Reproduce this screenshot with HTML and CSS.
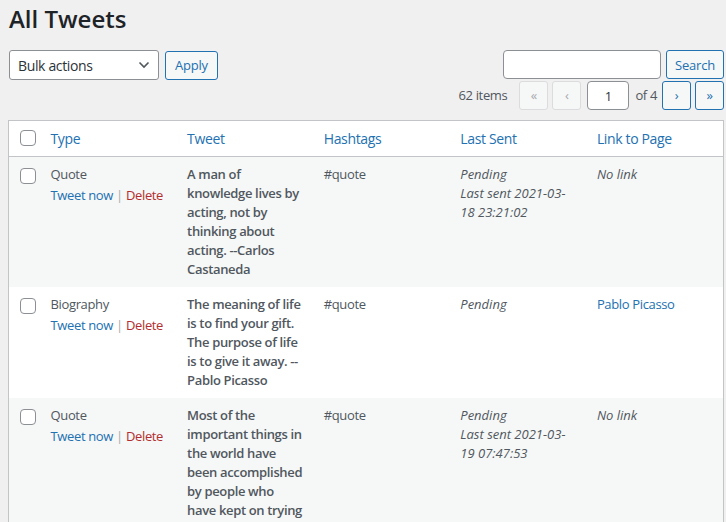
FILE: index.html
```html
<!DOCTYPE html>
<html lang="en">
<head>
<meta charset="utf-8">
<title>All Tweets</title>
<link rel="stylesheet" href="styles.css">
</head>
<body>
<div class="wrap">
  <h1 class="title">All Tweets</h1>
  <div class="toolbar">
    <div class="bulk">
      <div class="select">
        <span>Bulk actions</span>
        <svg class="chev" width="12" height="8" viewBox="0 0 12 8"><path d="M1.5 1.5 L6 6 L10.5 1.5" fill="none" stroke="#50575e" stroke-width="1.6"/></svg>
      </div>
      <button class="btn">Apply</button>
    </div>
    <div class="right">
      <div class="search">
        <input class="search-input" type="text">
        <button class="btn">Search</button>
      </div>
      <div class="pager">
        <span class="count">62 items</span>
        <span class="pbtn disabled">«</span>
        <span class="pbtn disabled">‹</span>
        <input class="page-input" type="text" value="1">
        <span class="of">of 4</span>
        <span class="pbtn">›</span>
        <span class="pbtn">»</span>
      </div>
    </div>
  </div>
  <table class="list">
    <colgroup>
      <col class="c-check">
      <col><col><col><col><col>
    </colgroup>
    <thead>
      <tr>
        <th class="check"><span class="cb"></span></th>
        <th><a>Type</a></th>
        <th><a>Tweet</a></th>
        <th><a>Hashtags</a></th>
        <th><a>Last Sent</a></th>
        <th><a>Link to Page</a></th>
      </tr>
    </thead>
    <tbody>
      <tr class="alt">
        <td class="check"><span class="cb"></span></td>
        <td>Quote<div class="actions"><a class="tw">Tweet now</a> <span class="sep">|</span> <a class="del">Delete</a></div></td>
        <td class="tweet">A man of knowledge lives by acting, not by thinking about acting. --Carlos Castaneda</td>
        <td>#quote</td>
        <td class="em">Pending<br>Last sent 2021-03-18 23:21:02</td>
        <td class="em">No link</td>
      </tr>
      <tr>
        <td class="check"><span class="cb"></span></td>
        <td>Biography<div class="actions"><a class="tw">Tweet now</a> <span class="sep">|</span> <a class="del">Delete</a></div></td>
        <td class="tweet">The meaning of life is to find your gift. The purpose of life is to give it away. --Pablo Picasso</td>
        <td>#quote</td>
        <td class="em">Pending</td>
        <td><a class="link">Pablo Picasso</a></td>
      </tr>
      <tr class="alt">
        <td class="check"><span class="cb"></span></td>
        <td>Quote<div class="actions"><a class="tw">Tweet now</a> <span class="sep">|</span> <a class="del">Delete</a></div></td>
        <td class="tweet">Most of the important things in the world have been accomplished by people who have kept on trying when there seemed to be no hope at all.</td>
        <td>#quote</td>
        <td class="em">Pending<br>Last sent 2021-03-19 07:47:53</td>
        <td class="em">No link</td>
      </tr>
    </tbody>
  </table>
</div>
</body>
</html>
```

FILE: styles.css
```css
html, body {
  margin: 0;
  padding: 0;
  background: #f0f0f1;
  overflow: hidden;
}
body {
  font-family: "Open Sans", "Noto Sans", sans-serif;
  font-size: 13px;
  line-height: 19px;
  letter-spacing: -0.35px;
  color: #3c434a;
}
.wrap {
  padding: 0 2px 0 8px;
}
.title {
  margin: 3px 0 0 1px;
  font-size: 24px;
  line-height: 31px;
  font-weight: 600;
  letter-spacing: 0;
  color: #1d2327;
}
.toolbar {
  display: flex;
  justify-content: space-between;
  align-items: flex-start;
  margin-top: 16px;
}
.bulk {
  display: flex;
  align-items: center;
  gap: 6px;
  padding-left: 1px;
}
.select {
  box-sizing: border-box;
  width: 150px;
  height: 30px;
  border: 1px solid #8c8f94;
  border-radius: 3px;
  background: #fff;
  display: flex;
  align-items: center;
  justify-content: space-between;
  padding: 0 8px 0 8px;
  color: #2c3338;
  font-size: 14px;
}
.btn {
  box-sizing: border-box;
  height: 29px;
  padding: 0 9px;
  border: 1px solid #2271b1;
  border-radius: 3px;
  background: #f6f7f7;
  color: #2271b1;
  font-family: inherit;
  font-size: 13px;
  letter-spacing: -0.2px;
}
.search .btn {
  width: 58px;
  padding: 0;
}
.right {
  display: flex;
  flex-direction: column;
  align-items: flex-end;
  gap: 2px;
}
.search {
  display: flex;
  gap: 5px;
}
.search-input {
  box-sizing: border-box;
  width: 158px;
  height: 29px;
  border: 1px solid #8c8f94;
  border-radius: 4px;
  background: #fff;
  margin: 0;
}
.pager {
  display: flex;
  align-items: center;
  gap: 4px;
  color: #50575e;
}
.count {
  margin-right: 8px;
}
.pbtn {
  box-sizing: border-box;
  width: 29px;
  height: 29px;
  border: 1px solid #2271b1;
  border-radius: 3px;
  background: #f6f7f7;
  color: #2271b1;
  display: flex;
  align-items: center;
  justify-content: center;
  font-size: 13px;
}
.pbtn.disabled {
  border-color: #dcdcde;
  color: #a7aaad;
}
.page-input {
  box-sizing: border-box;
  width: 42px;
  height: 29px;
  margin: 0 2px;
  border: 1px solid #8c8f94;
  border-radius: 4px;
  background: #fff;
  text-align: center;
  font-family: inherit;
  font-size: 13px;
  color: #2c3338;
}
.of {
  margin-right: 1px;
}
.list {
  margin-top: 10px;
  width: 716px;
  table-layout: fixed;
  border-collapse: collapse;
  background: #fff;
  border: 1px solid #c3c4c7;
}
.c-check {
  width: 32px;
}
.list th {
  text-align: left;
  font-weight: 400;
  padding: 8px 10px;
  border-bottom: 1px solid #c3c4c7;
  font-size: 14px;
  line-height: 19px;
}
.list th a {
  color: #2271b1;
}
.list td {
  vertical-align: top;
  padding: 8px 10px;
  color: #50575e;
}
.list th.check {
  vertical-align: top;
  padding: 9px 0 0 11px;
}
.list td.check {
  padding: 11px 0 0 11px;
}
.list tr.alt td {
  background: #f6f7f7;
}
.cb {
  display: block;
  box-sizing: border-box;
  width: 16px;
  height: 16px;
  border: 1px solid #8c8f94;
  border-radius: 4px;
  background: #fff;
}
.tweet {
  font-weight: 600;
}
.list td.em {
  font-style: italic;
  letter-spacing: 0;
}
.actions {
  margin-top: 2px;
}
.tw, .link {
  color: #2271b1;
}
.del {
  color: #b32d2e;
}
.sep {
  color: #a7aaad;
}
```
